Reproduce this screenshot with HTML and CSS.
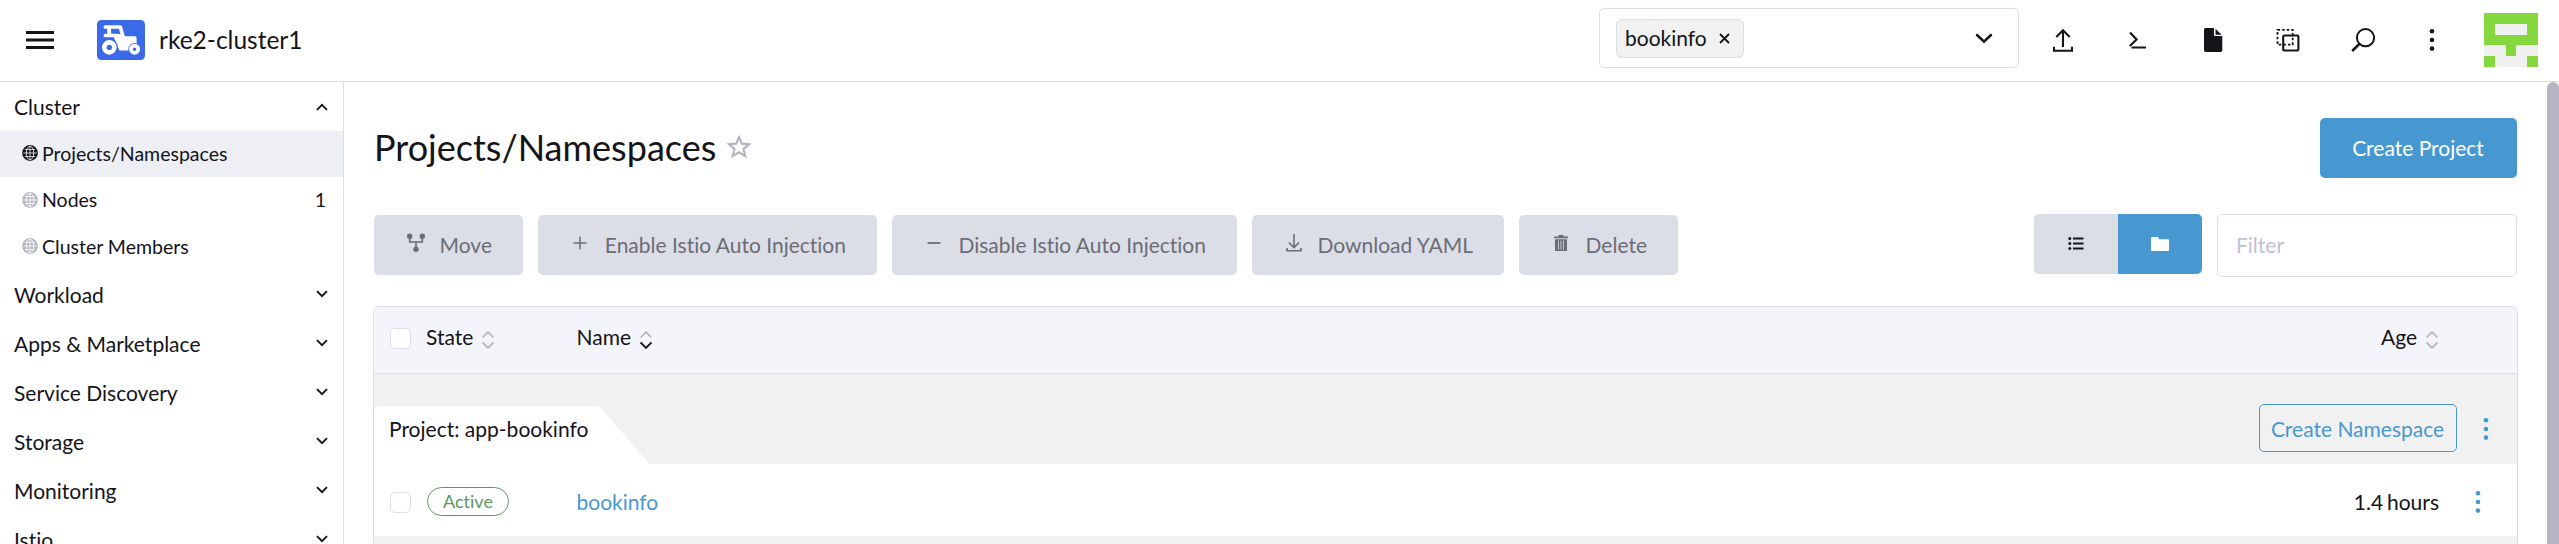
FILE: index.html
```html
<!DOCTYPE html>
<html lang="en">
<head>
<meta charset="utf-8">
<title>rke2-cluster1 - Projects/Namespaces</title>
<link rel="stylesheet" href="styles.css">
</head>
<body>
<svg class="defs" width="0" height="0">
  <symbol id="chev" viewBox="0 0 12 8"><path d="M1 1.2 6 6.2 11 1.2" fill="none" stroke="currentColor" stroke-width="1.9"/></symbol>
  <symbol id="globe" viewBox="0 0 16 16"><circle cx="8" cy="8" r="7.9" fill="currentColor"/><path d="M8 1.200v13.600M1.200 8h13.600M2.800 4.500h10.400M2.800 11.500h10.400" stroke="var(--line)" stroke-width=".8" fill="none"/><ellipse cx="8" cy="8" rx="3.700" ry="6.800" stroke="var(--line)" stroke-width=".9" fill="none"/></symbol>
  <symbol id="dots" viewBox="0 0 6 24"><circle cx="3" cy="3.2" r="2.3"/><circle cx="3" cy="12" r="2.3"/><circle cx="3" cy="20.6" r="2.3"/></symbol>
  <symbol id="sort" viewBox="0 0 12 18"><path d="M.600 6.500 6 1.100 11.400 6.500" fill="none" stroke="#b6b6ba" stroke-width="1.7"/><path d="M.600 11.500 6 16.900 11.400 11.500" fill="none" stroke="currentColor" stroke-width="1.8"/></symbol>
</svg>
<header class="topbar">
  <svg class="menu" width="28" height="18" viewBox="0 0 28 18"><path d="M0 1.5h28M0 9h28M0 16.5h28" stroke="#141419" stroke-width="2.8"/></svg>
  <svg class="logo" width="48" height="40" viewBox="0 0 48 40">
    <rect width="48" height="40" rx="4.5" fill="#3b6ae8"/>
    <path d="M8.300 7H23.300L26.500 18H37.800V25M8.300 15.500H20" fill="none" stroke="#fff" stroke-width="3.600" stroke-linecap="round" stroke-linejoin="round"/>
    <path d="M10.200 7h3.900v9h-3.900zM17 14h8l3 4h10v8l-6 4.500h-9.500L17 18z" fill="#fff"/>
    <circle cx="12.300" cy="27.400" r="8.600" fill="#3b6ae8"/>
    <circle cx="12.300" cy="27.400" r="5" fill="none" stroke="#fff" stroke-width="4.600"/>
    <circle cx="37.600" cy="29.200" r="6.300" fill="#3b6ae8"/>
    <circle cx="37.600" cy="29.200" r="3.600" fill="none" stroke="#fff" stroke-width="3.800"/>
  </svg>
  <div class="cluster">rke2-cluster1</div>
  <div class="select">
    <span class="tag"><span>bookinfo</span><svg width="11" height="11" viewBox="0 0 11 11"><path d="M1 1l9 9M10 1l-9 9" stroke="#141419" stroke-width="1.8"/></svg></span>
    <svg class="caret" width="18" height="11" viewBox="0 0 18 11"><path d="M2 2l7 6.600L16 2" fill="none" stroke="#141419" stroke-width="2.500" stroke-linecap="round"/></svg>
  </div>
  <div class="actions">
    <svg width="24" height="24" viewBox="0 0 24 24"><path d="M12 19V2M5.300 9 12 2.200 18.700 9M3 18.800V22.800H21V18.800" fill="none" stroke="#141419" stroke-width="2.100"/></svg>
    <svg width="24" height="24" viewBox="0 0 24 24"><path d="M4 4.500 10.600 11.500 3.800 18M5.500 19.500H20" fill="none" stroke="#141419" stroke-width="2.100"/></svg>
    <svg width="24" height="24" viewBox="0 0 24 24"><path d="M4.500 0H13v7q0 1 1 1h7.300v14.300q0 1.700-1.700 1.700H4.700Q3 24 3 22.300V1.500Q3 0 4.500 0zM14.500.700 20.700 6.700h-6.200z" fill="#141419"/></svg>
    <svg width="24" height="24" viewBox="0 0 24 24"><rect x="7.200" y="7.500" width="15.200" height="15" rx="1" fill="none" stroke="#141419" stroke-width="2.100"/><rect x="1.500" y="1.900" width="15.200" height="14.800" fill="none" stroke="#141419" stroke-width="1.800" stroke-dasharray="2.600 2"/></svg>
    <svg width="24" height="24" viewBox="0 0 24 24"><circle cx="14.500" cy="9.700" r="8.600" fill="none" stroke="#141419" stroke-width="2"/><path d="M8.800 15.500 1.200 23" stroke="#141419" stroke-width="2.500"/></svg>
    <svg width="6" height="24" class="dark"><use href="#dots"/></svg>
  </div>
  <svg class="avatar" width="54" height="54" viewBox="0 0 5 5" shape-rendering="crispEdges"><path fill="#84d73c" d="M0 0h5v5H0z"/><path fill="#f0f0f0" d="M1 1h3v1H1zM0 3h2v1H0zM3 3h2v1H3zM1 4h3v1H1z"/></svg>
</header>
<div class="body">
  <nav class="side">
    <div class="group">Cluster<svg class="flip" width="12" height="8"><use href="#chev"/></svg></div>
    <div class="item active"><svg width="16" height="16"><use href="#globe"/></svg>Projects/Namespaces</div>
    <div class="item"><svg width="16" height="16"><use href="#globe"/></svg>Nodes<span class="count">1</span></div>
    <div class="item"><svg width="16" height="16"><use href="#globe"/></svg>Cluster Members</div>
    <div class="group">Workload<svg width="12" height="8"><use href="#chev"/></svg></div>
    <div class="group">Apps &amp; Marketplace<svg width="12" height="8"><use href="#chev"/></svg></div>
    <div class="group">Service Discovery<svg width="12" height="8"><use href="#chev"/></svg></div>
    <div class="group">Storage<svg width="12" height="8"><use href="#chev"/></svg></div>
    <div class="group">Monitoring<svg width="12" height="8"><use href="#chev"/></svg></div>
    <div class="group">Istio<svg width="12" height="8"><use href="#chev"/></svg></div>
  </nav>
  <main class="main">
    <div class="title-row">
      <h1>Projects/Namespaces</h1>
      <svg class="star" width="24" height="23" viewBox="0 0 24 23"><path d="M12 2.300 14.800 8.700l7.200.600-5.500 4.600 1.800 7.200L12 17.400l-6.300 3.700 1.800-7.200L2 9.300l7.200-.600z" fill="none" stroke="#b6b6c2" stroke-width="2.200"/></svg>
      <button class="btn primary">Create Project</button>
    </div>
    <div class="tools">
      <button class="btn off w-move"><svg width="18" height="20" viewBox="0 0 18 20"><path d="M2.700 3v6h12.600V3M9 9v8" fill="none" stroke="#6c6c76" stroke-width="1.600"/><g fill="#6c6c76"><circle cx="2.700" cy="3.200" r="2.700"/><circle cx="15.300" cy="3.200" r="2.700"/><circle cx="9" cy="16.300" r="2.700"/></g></svg>Move</button>
      <button class="btn off w-enable"><svg width="14" height="14" viewBox="0 0 14 14"><path d="M7 .500v13M.500 7h13" stroke="#6c6c76" stroke-width="1.500"/></svg>Enable Istio Auto Injection</button>
      <button class="btn off w-disable"><svg width="14" height="14" viewBox="0 0 14 14"><path d="M.500 7h13" stroke="#6c6c76" stroke-width="1.800"/></svg>Disable Istio Auto Injection</button>
      <button class="btn off w-down"><svg width="16" height="18" viewBox="0 0 16 18"><path d="M8 0v13M3 8.500l5 5 5-5M1 14v2.800h14V14" fill="none" stroke="#6c6c76" stroke-width="1.600"/></svg>Download YAML</button>
      <button class="btn off w-del"><svg width="14" height="16" viewBox="0 0 14 16"><path d="M0 1.500h4.500V0h5v1.500H14v1.700H0zM1 4.300h12V16H1z" fill="#6c6c76"/><path d="M4.500 5.500v9M7 5.500v9M9.500 5.500v9" stroke="#dcdee7" stroke-width=".8"/></svg>Delete</button>
      <div class="toggle">
        <span><svg width="16" height="13" viewBox="0 0 16 13"><path d="M5 1.500h10.500M5 6.500h10.500M5 11.500h10.500" stroke="#141419" stroke-width="2"/><g fill="#141419"><circle cx="1.800" cy="1.500" r="1.500"/><circle cx="1.800" cy="6.500" r="1.500"/><circle cx="1.800" cy="11.500" r="1.500"/></g></svg></span>
        <span class="on"><svg width="18" height="14" viewBox="0 0 18 14"><path d="M1 0h5.500q1 0 1.200 1l.3 1.200h9q1 0 1 1V14H0V1q0-1 1-1z" fill="#fff"/></svg></span>
      </div>
      <input class="filter" placeholder="Filter">
    </div>
    <div class="table">
      <div class="thead">
        <span class="check"></span>
        <span class="c-state">State<svg width="12" height="18"><use href="#sort"/></svg></span>
        <span class="c-name">Name<svg class="dark" width="12" height="18"><use href="#sort"/></svg></span>
        <span class="c-age">Age<svg width="12" height="18"><use href="#sort"/></svg></span>
      </div>
      <div class="grp">
        <div class="tab">Project: app-bookinfo</div>
        <svg class="slope" width="54" height="58" viewBox="0 0 54 58"><path d="M0 0q3.500.300 6 3.200L53.500 58H0z" fill="#fff"/></svg>
        <button class="ns">Create Namespace</button>
        <svg class="blue" width="6" height="24"><use href="#dots"/></svg>
      </div>
      <div class="row">
        <span class="check"></span>
        <span class="c-state"><span class="badge">Active</span></span>
        <span class="c-name link">bookinfo</span>
        <span class="hours">1.4 hours</span>
        <svg class="blue" width="6" height="24"><use href="#dots"/></svg>
      </div>
    </div>
  </main>
  <div class="scroll"></div>
</div>
</body>
</html>
```
FILE: styles.css
```css
* { box-sizing: border-box; }
html, body { margin: 0; height: 100%; overflow: hidden; }
body { font: 21px/27px Lato, sans-serif; font-variant-ligatures: none; color: #141419; background: #fff; display: flex; flex-direction: column; }
svg { display: block; flex: none; }
.defs { position: absolute; }
button, input { font: inherit; font-variant-ligatures: none; color: inherit; margin: 0; }

.topbar { height: 82px; flex: none; border-bottom: 1px solid #dcdee7; display: flex; align-items: center; padding: 0 21px 1px 26px; }
.logo { margin-left: 43px; }
.cluster { margin-left: 14px; font-size: 24.5px; line-height: 30px; }
.select { margin: -4px 0 0 auto; width: 420px; height: 60px; border: 1px solid #dcdee7; border-radius: 5px; display: flex; align-items: center; justify-content: space-between; padding: 0 25px 0 16px; }
.tag { height: 39px; width: 128px; background: #f1f1f1; border: 1px solid #dcdee7; border-radius: 6px; display: flex; align-items: center; justify-content: space-between; padding: 0 13px 0 8px; }
.tag span { margin-top: -2px; }
.actions { display: flex; gap: 51px; margin-left: 32px; }
.actions svg:last-child { margin-left: 3px; }
.avatar { margin-left: 49px; }
.dark { color: #141419; fill: #141419; }
.blue { fill: #4798d0; }

.body { flex: 1; min-height: 0; display: flex; }
.side { width: 344px; flex: none; border-right: 1px solid #dcdee7; overflow: hidden; }
.group { height: 49px; display: flex; align-items: center; justify-content: space-between; padding: 0 15.5px 0 14px; }
.flip { transform: scaleY(-1); }
.item { height: 46.33px; display: flex; align-items: center; gap: 4.5px; padding: 0 17px 1.5px 21.5px; font-size: 19.5px; --line: #fff; }
.item svg { color: #b6b6c2; }
.item.active { background: #eeeff4; --line: #eeeff4; }
.item.active svg { color: #141419; }
.count { margin-left: auto; }

.main { flex: 1; min-width: 0; padding: 36px 29px 0; }
.title-row { display: flex; align-items: center; padding: 0 1px; height: 60px; }
h1 { font-weight: 400; font-size: 36px; line-height: 44px; margin: -2px 0 0; }
.star { margin: -3px 0 0 11px; }
.btn { height: 60px; border: 0; border-radius: 5px; display: flex; align-items: center; padding: 0 31px 2px; white-space: nowrap; }
.primary { margin-left: auto; width: 197px; justify-content: center; background: #4798d0; color: #fff; padding: 0 1px 2px 0; }
.tools { display: flex; gap: 15px; margin-top: 36px; height: 63px; padding: 0 1px; }
.tools .btn { margin-top: 1px; }
.off { background: #dcdee7; color: #6c6c76; justify-content: space-between; }
.off svg { margin-top: -3px; }
.w-move { width: 149px; padding-left: 33px; }
.w-enable { width: 339px; padding-left: 35px; }
.w-disable { width: 345px; padding-left: 35px; }
.w-down { width: 252px; padding-left: 34px; }
.w-del { width: 159px; padding-left: 35px; }
.toggle { margin-left: auto; display: flex; height: 60px; border-radius: 5px; overflow: hidden; background: #dcdee7; }
.toggle span { width: 84px; display: flex; align-items: center; justify-content: center; padding-bottom: 1px; }
.toggle .on { background: #4798d0; }
.filter { width: 300px; height: 63px; border: 1px solid #dcdee7; border-radius: 5px; padding: 0 18px 2px; outline: 0; }
.filter::placeholder { color: #bec1d2; }

.table { margin-top: 29px; height: 400px; border: 1px solid #dcdee7; border-radius: 6px; background: #f1f1f1; overflow: hidden; }
.thead { height: 67px; background: #f4f5fa; border-bottom: 1px solid #dcdee7; display: flex; align-items: center; padding: 0 79.5px 4px 16px; }
.check { width: 21px; height: 21px; border: 1px solid #dcdee7; border-radius: 5px; background: #fff; margin-right: 15px; }
.c-state { width: 150.5px; }
.thead span { display: flex; align-items: center; gap: 9px; }
.thead .c-state, .thead .c-name, .thead .c-age { margin-top: -3px; }
.thead svg { color: #b6b6ba; margin-top: 6px; }
.thead .dark { color: #141419; }
.thead .c-age { margin-left: auto; gap: 8.5px; }
.grp { height: 90px; padding: 32px 28px 0 0; display: flex; align-items: flex-start; }
.tab { height: 58px; background: #fff; border-top-left-radius: 6px; padding: 9px 0 0 15px; width: 223px; white-space: nowrap; }
.slope { margin-left: -1px; }
.ns { margin: -2px 26px 0 auto; width: 198px; height: 48px; padding: 0 1px 0 0; border: 1px solid #4798d0; border-radius: 5px; background: none; color: #4798d0; }
.grp .blue { margin-top: 11px; }
.row { height: 72px; background: #fff; display: flex; align-items: center; padding: 5px 36px 1px 16px; }
.badge { display: flex; align-items: center; justify-content: center; margin: -1px 0 0 1px; width: 82px; height: 29px; border: 1px solid #5d995d; border-radius: 15px; color: #5d995d; font-size: 18px; }
.link { color: #4798d0; margin-top: -2px; }
.hours { margin: -2px 36px 0 auto; word-spacing: -1.5px; }
.scroll { width: 12px; background: #b6b6c2; border-radius: 6px 6px 0 0; }
```
